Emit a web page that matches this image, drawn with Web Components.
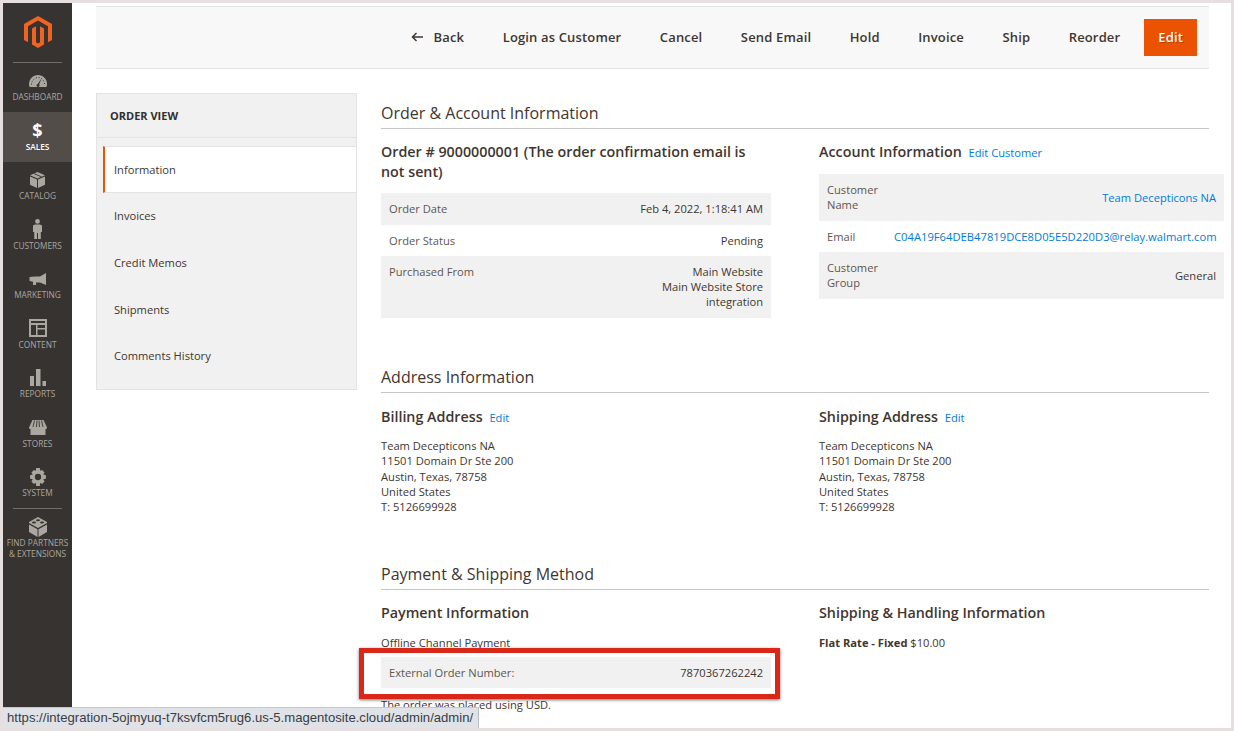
<!DOCTYPE html>
<html lang="en">
<head>
<meta charset="UTF-8" />
<title>Order View</title>
<style>
  html, body { margin: 0; height: 100%; }
  body { background: #e7dfdf; font-family: "Open Sans", sans-serif; color: #41362f; overflow: hidden; }
  a { color: #007bdb; text-decoration: none; }
</style>
</head>
<body>
<template id="shell-tmpl">
  <style>
    :host { display: flex; position: relative; margin: 3px; height: 725px; background: #fff; overflow: hidden; }
    .side { flex: 0 0 69px; background: #373330; }
    .main { flex: 1; min-width: 0; padding: 3px 22px 0 24px; }
    .body { display: flex; gap: 24px; margin-top: 24px; }
    .col { flex: 1; min-width: 0; }
  </style>
  <div class="side"><slot name="nav"></slot></div>
  <div class="main">
    <slot name="toolbar"></slot>
    <div class="body">
      <slot name="tabs"></slot>
      <div class="col"><slot></slot></div>
    </div>
  </div>
  <slot name="status"></slot>
</template>

<script>
  function shadow(el, html) {
    el.attachShadow({ mode: "open" }).innerHTML = html;
  }

  customElements.define("admin-shell", class extends HTMLElement {
    connectedCallback() {
      this.attachShadow({ mode: "open" });
      this.shadowRoot.append(document.getElementById("shell-tmpl").content.cloneNode(true));
    }
  });

  customElements.define("admin-logo", class extends HTMLElement {
    connectedCallback() {
      shadow(this, `<style>
        :host { display: block; height: 59px; margin: 0 10px -.5px; border-bottom: 1px solid #736d68; }
        div { display: flex; justify-content: center; padding-top: 13px; }
      </style><div><svg width="28" height="32" viewBox="0 0 21 24"><path fill="#f26322" d="M10.5 0L0 6v12l3 1.700V7.700l7.500-4.300 7.500 4.300v12l3-1.700V6zM12 19.700l-1.500.9-1.500-.9V7.700L6 9.400v12L10.500 24 15 21.400v-12l-3-1.700z"/></svg></div>`);
    }
  });

  customElements.define("nav-item", class extends HTMLElement {
    connectedCallback() {
      shadow(this, `<style>
        :host { display: flex; flex-direction: column; align-items: center; height: 49.5px; box-sizing: border-box; padding-top: 6px; color: #aaa6a0; font-size: 8.3px; line-height: 11px; text-align: center; }
        :host([active]) { background: #524d49; color: #fff; font-weight: 600; }
        .i { height: 24px; display: flex; align-items: center; justify-content: center; margin-bottom: -1.5px; font-size: 18px; font-weight: 700; }
      </style><div class="i"><slot name="icon"></slot></div><slot></slot>`);
    }
  });

  customElements.define("nav-rule", class extends HTMLElement {
    connectedCallback() {
      shadow(this, `<style>:host { display: block; height: 1px; margin: 0 10px; background: #736d68; }</style>`);
    }
  });

  customElements.define("page-toolbar", class extends HTMLElement {
    connectedCallback() {
      shadow(this, `<style>
        :host { display: flex; align-items: center; justify-content: flex-end; height: 61px; padding-right: 12px; background: #f8f8f8; border-top: 1px solid #e3e3e3; border-bottom: 1px solid #e3e3e3; gap: 38.5px; }
      </style><slot></slot>`);
    }
  });

  customElements.define("tool-button", class extends HTMLElement {
    connectedCallback() {
      shadow(this, `<style>
        :host { display: inline-flex; align-items: center; gap: 11px; padding-bottom: 2px; font-size: 13px; font-weight: 600; letter-spacing: .15px; color: #41362f; white-space: nowrap; }
        :host([primary]) { background: #eb5202; color: #fff; height: 37px; padding: 0 14px 2px; box-sizing: border-box; margin-left: -14.5px; text-shadow: 1px 1px 0 rgba(0,0,0,.25); }
      </style><slot name="icon"></slot><slot></slot>`);
    }
  });

  customElements.define("side-tabs", class extends HTMLElement {
    connectedCallback() {
      shadow(this, `<style>
        :host { display: block; flex: 0 0 261px; box-sizing: border-box; height: 297px; background: #f1f1f1; border: 1px solid #e3e3e3; }
        .t { height: 43px; line-height: 43px; padding-left: 13px; font-size: 11px; font-weight: 700; color: #303030; border-bottom: 1px solid #e3e3e3; margin-bottom: 8px; }
      </style><div class="t">ORDER VIEW</div><slot></slot>`);
    }
  });

  customElements.define("side-tab", class extends HTMLElement {
    connectedCallback() {
      shadow(this, `<style>
        :host { display: block; height: 46.8px; line-height: 46.8px; margin-left: 6px; padding-left: 11px; font-size: 11.15px; color: #41362f; }
        :host([active]) { background: #fff; border-left: 2px solid #eb5202; padding-left: 9px; border-top: 1px solid #e3e3e3; border-bottom: 1px solid #e3e3e3; height: 45px; line-height: 45px; }
      </style><slot></slot>`);
    }
  });

  customElements.define("section-title", class extends HTMLElement {
    connectedCallback() {
      shadow(this, `<style>
        :host { display: block; font-size: 16px; line-height: 22px; padding-bottom: 4px; border-bottom: 1px solid #c9c6c4; color: #41362f; }
      </style><slot></slot>`);
    }
  });

  customElements.define("two-col", class extends HTMLElement {
    connectedCallback() {
      shadow(this, `<style>
        :host { display: grid; grid-template-columns: 390px 390px; column-gap: 48px; }
      </style><slot></slot>`);
    }
  });

  customElements.define("sub-title", class extends HTMLElement {
    connectedCallback() {
      shadow(this, `<style>
        :host { display: block; font-size: 14.3px; line-height: 20px; font-weight: 600; color: #41362f; }
        ::slotted(a) { font-size: 11.15px; font-weight: 400; margin-left: 3px; }
      </style><slot></slot>`);
    }
  });

  customElements.define("info-row", class extends HTMLElement {
    connectedCallback() {
      const label = this.getAttribute("label");
      const w = this.getAttribute("w") || "auto";
      shadow(this, `<style>
        :host { display: flex; justify-content: space-between; align-items: var(--al, flex-start); padding: 8.25px 8px; font-size: 11.15px; line-height: 15px; color: #41362f; }
        :host([shade]) { background: #f1f1f1; }
        .l { color: #5f564f; flex: 0 0 ${w}; }
        .v { text-align: right; white-space: nowrap; }
      </style><div class="l">${label}</div><div class="v"><slot></slot></div>`);
    }
  });

  customElements.define("red-highlight", class extends HTMLElement {
    connectedCallback() {
      shadow(this, `<style>
        :host { display: block; position: relative; }
        .f { position: absolute; left: -22px; right: -9px; top: -9px; bottom: -11px; border: 5px solid #d92817; box-shadow: 0 1px 3px rgba(0,0,0,.55); pointer-events: none; }
      </style><slot></slot><div class="f"></div>`);
    }
  });

  customElements.define("status-tip", class extends HTMLElement {
    connectedCallback() {
      shadow(this, `<style>
        :host { position: absolute; left: 0; bottom: 0; height: 20px; line-height: 20px; padding: 0 5px 0 4px; background: #dfe2e7; border-top: 1px solid #c4c7cc; border-right: 1px solid #b9bcc1; font-family: "Liberation Sans", sans-serif; font-size: 13.13px; color: #3a3d42; white-space: nowrap; }
      </style><slot></slot>`);
    }
  });

  customElements.define("plain-text", class extends HTMLElement {
    connectedCallback() {
      shadow(this, `<style>:host { display: block; font-size: 11.15px; line-height: 15.3px; color: #41362f; }</style><slot></slot>`);
    }
  });

  customElements.define("address-lines", class extends HTMLElement {
    connectedCallback() {
      shadow(this, `<style>:host { display: block; margin-top: 10px; font-size: 11.15px; line-height: 15.3px; color: #41362f; }</style><slot></slot>`);
    }
  });
</script>

<admin-shell>
  <div slot="nav">
    <admin-logo></admin-logo>
    <nav-item><svg slot="icon" width="18" height="12" viewBox="0 0 18 12"><path fill="#aaa6a0" d="M9 0C4 0 0 4 0 9c0 1 .2 2 .5 3h17c.3-1 .5-2 .5-3 0-5-4-9-9-9z"/><path fill="none" stroke="#373330" stroke-width="1" stroke-dasharray="1 1.8" d="M2.500 9.500C2.500 5.500 5.500 2.500 9 2.500s6.500 3 6.500 7"/><path fill="#373330" d="M12.500 3.500l-2.300 6a1.500 1.500 0 1 1-1.500-.6z"/></svg>DASHBOARD</nav-item>
    <nav-item active><span slot="icon" style="color:#fff">$</span>SALES</nav-item>
    <nav-item><svg slot="icon" width="15" height="16" viewBox="0 0 15 16"><path fill="#aaa6a0" d="M7.500 0L15 3.300 7.500 6.600 0 3.300zM0 4.500l7 3V16l-7-3.300zM15 4.500v8.200L8 16V7.500z"/><path fill="none" stroke="#373330" stroke-width=".9" d="M4 1.600l7.500 3.300"/></svg>CATALOG</nav-item>
    <nav-item><svg slot="icon" width="9" height="20" viewBox="0 0 9 20"><path fill="#aaa6a0" d="M4.500 0a2.400 2.400 0 1 1 0 4.800 2.400 2.400 0 0 1 0-4.800zM2 5.500h5l2 1v6.500H7.800v7H5v-6H4v6H1.200v-7H0V6.500z"/></svg>CUSTOMERS</nav-item>
    <nav-item><svg slot="icon" width="17" height="12" viewBox="0 0 17 12"><path fill="#aaa6a0" d="M17 0v12L11 9.500H7V12H4V8.800L.5 8V4l5.500-.5h5z"/></svg>MARKETING</nav-item>
    <nav-item><svg slot="icon" width="18" height="18" viewBox="0 0 18 18"><path fill="#aaa6a0" fill-rule="evenodd" d="M0 0h18v18H0zm2 2v2h14V2zm0 4v10h5V6zm6.500 0v3H16V6zm0 4.500V16H16v-5.500z"/></svg>CONTENT</nav-item>
    <nav-item><svg slot="icon" width="16" height="17" viewBox="0 0 16 17"><path fill="#aaa6a0" d="M0 7h4v10H0zM6 0h4.500v17H6zM12.500 12H16v5h-3.500z"/></svg>REPORTS</nav-item>
    <nav-item><svg slot="icon" width="18" height="15" viewBox="0 0 18 15"><path fill="#aaa6a0" d="M3.500 0h11L18 7.500c0 1-.8 1.500-1.500 1.500V15h-15V9C.8 9 0 8.500 0 7.500z"/><path fill="none" stroke="#373330" stroke-width=".9" d="M5.500.5L4 7M8 .5L7.500 7M10 .5l.5 6.500M12.500.5L14 7"/></svg>STORES</nav-item>
    <nav-item><svg slot="icon" width="18" height="18" viewBox="0 0 20 20"><path fill="#aaa6a0" fill-rule="evenodd" d="M8 0h4l.5 3 2-.8 2.800 2.800-1.500 2.200 3 .8v4l-3 .6 1.500 2.400-2.800 2.800-2-1.500L12 20H8l-.5-3.700-2 1.500L2.700 15l1.500-2.400-3-.6V8l3-.8L2.700 5l2.800-2.800 2 .8zm2 6.500a3.500 3.500 0 1 0 0 7 3.500 3.500 0 0 0 0-7z"/></svg>SYSTEM</nav-item>
    <nav-rule></nav-rule>
    <nav-item><svg slot="icon" width="18" height="20" viewBox="0 0 18 20"><path fill="#aaa6a0" d="M9 0l9 5v1L9 11 0 6V5zM0 7.500l8.500 4.700V20L0 15zM18 7.500V15l-8.500 5v-7.800z"/><ellipse cx="9" cy="3.300" rx="2" ry="1" fill="#373330"/><ellipse cx="5" cy="5.500" rx="2" ry="1" fill="#373330"/><ellipse cx="13" cy="5.500" rx="2" ry="1" fill="#373330"/></svg>FIND PARTNERS<br>&amp; EXTENSIONS</nav-item>
  </div>

  <page-toolbar slot="toolbar">
    <tool-button><svg slot="icon" width="12" height="10" viewBox="0 0 12 10"><path fill="none" stroke="#41362f" stroke-width="1.500" d="M12 5H1.500M5.500 1l-4 4 4 4"/></svg>Back</tool-button>
    <tool-button>Login as Customer</tool-button>
    <tool-button>Cancel</tool-button>
    <tool-button>Send Email</tool-button>
    <tool-button>Hold</tool-button>
    <tool-button>Invoice</tool-button>
    <tool-button>Ship</tool-button>
    <tool-button>Reorder</tool-button>
    <tool-button primary>Edit</tool-button>
  </page-toolbar>

  <side-tabs slot="tabs">
    <side-tab active>Information</side-tab>
    <side-tab>Invoices</side-tab>
    <side-tab>Credit Memos</side-tab>
    <side-tab>Shipments</side-tab>
    <side-tab>Comments History</side-tab>
  </side-tabs>

  <section-title style="margin-top:9px">Order &amp; Account Information</section-title>
  <two-col style="margin-top:13px;height:224px">
    <div>
      <sub-title style="margin-bottom:11px">Order # 9000000001 (The order confirmation email is not sent)</sub-title>
      <info-row shade label="Order Date">Feb 4, 2022, 1:18:41 AM</info-row>
      <info-row label="Order Status">Pending</info-row>
      <info-row shade label="Purchased From">Main Website<br>Main Website Store<br>integration</info-row>
    </div>
    <div style="width:405px">
      <sub-title style="margin-bottom:11px">Account Information <a>Edit Customer</a></sub-title>
      <info-row shade w="67px" label="Customer Name" style="--al:center"><a>Team Decepticons NA</a></info-row>
      <info-row w="67px" label="Email"><a style="font-size:11.22px">C04A19F64DEB47819DCE8D05E5D220D3@relay.walmart.com</a></info-row>
      <info-row shade w="67px" label="Customer Group" style="--al:center">General</info-row>
    </div>
  </two-col>

  <section-title>Address Information</section-title>
  <two-col style="margin-top:14px;height:156px">
    <div>
      <sub-title>Billing Address <a>Edit</a></sub-title>
      <address-lines>Team Decepticons NA<br>11501 Domain Dr Ste 200<br>Austin, Texas, 78758<br>United States<br>T: 5126699928</address-lines>
    </div>
    <div>
      <sub-title>Shipping Address <a>Edit</a></sub-title>
      <address-lines>Team Decepticons NA<br>11501 Domain Dr Ste 200<br>Austin, Texas, 78758<br>United States<br>T: 5126699928</address-lines>
    </div>
  </two-col>

  <section-title>Payment &amp; Shipping Method</section-title>
  <two-col style="margin-top:13px">
    <div>
      <sub-title>Payment Information</sub-title>
      <plain-text style="margin-top:12px">Offline Channel Payment</plain-text>
      <red-highlight style="margin-top:6.7px"><info-row shade label="External Order Number:">7870367262242</info-row></red-highlight>
      <plain-text style="margin-top:8.7px">The order was placed using USD.</plain-text>
    </div>
    <div>
      <sub-title>Shipping &amp; Handling Information</sub-title>
      <plain-text style="margin-top:12px"><b style="font-weight:700">Flat Rate - Fixed</b> $10.00</plain-text>
    </div>
  </two-col>

  <status-tip slot="status">https://integration-5ojmyuq-t7ksvfcm5rug6.us-5.magentosite.cloud/admin/admin/</status-tip>
</admin-shell>
</body>
</html>
